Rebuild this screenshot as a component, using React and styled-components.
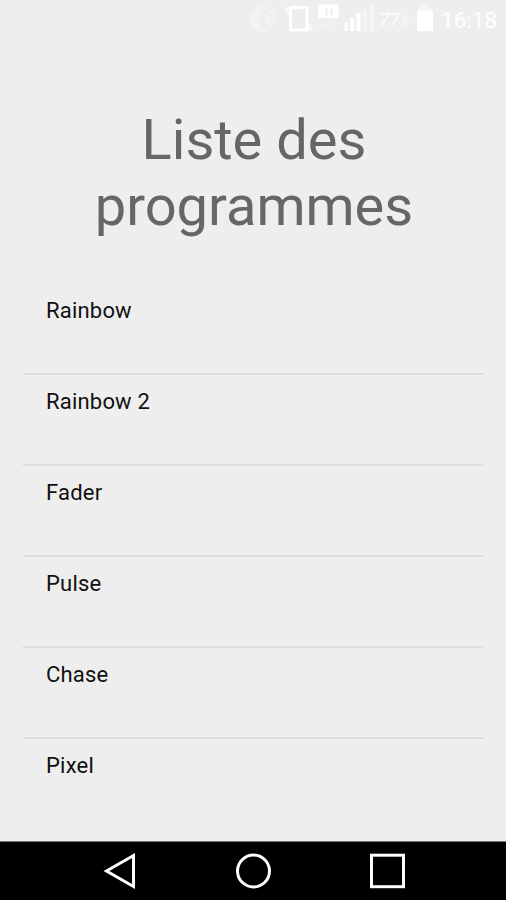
import React from "react"
import styled, { createGlobalStyle } from "styled-components"

const programs = ["Rainbow", "Rainbow 2", "Fader", "Pulse", "Chase", "Pixel"]

const App = () => (
  <Screen>
    <GlobalStyle />
    <StatusBar>
      <svg width="134" height="38" viewBox="0 0 134 38">
        {/* data saver */}
        <circle cx="18" cy="18.5" r="11" fill="none" stroke="#fff" strokeWidth="2.5" opacity="0.3" />
        <path d="M8 15l8-5v6l-3 4 4 6-4 2-6-6zM19 13l5 2 3 5-4 6-3-5z" fill="#fff" opacity="0.3" />
        {/* vibrate */}
        <rect x="45.5" y="7.5" width="16.5" height="22.5" rx="1" fill="none" stroke="#fff" strokeWidth="3" />
        <path d="M39 7h6v8h-3v-4h-3zM63 22l5 5-2 5h-3z" fill="#fff" opacity="0.6" />
        {/* network type */}
        <rect x="73" y="4.5" width="20.5" height="13.5" rx="2" fill="#fff" />
        <path d="M81.5 8v7M86.5 8v7" stroke="#eee" strokeWidth="2" />
        <path d="M83 11.5h2" stroke="#eee" opacity="0.6" />
        <path d="M78 20v7m-2-3l2 4 2-4M87 29v-8m-2 3l2-3 2 3" stroke="#fff" fill="none" opacity="0.35" />
        {/* signal */}
        <path d="M99.5 22.5h3.5V31h-3.5z" fill="#fff" opacity="0.85" />
        <path d="M105 18h4v13h-4zM111.5 13h4v18h-4z" fill="#fff" />
        <path d="M118 9h3.500v22H118zM125 4.500h4V31h-4z" fill="#fff" opacity="0.35" />
      </svg>
      <Percent>
        77<small>%</small>
      </Percent>
      <svg width="18" height="38" viewBox="0 0 18 38">
        <path d="M1 11l3-6.5h7l6 6.5z" fill="#fff" opacity="0.55" />
        <path d="M1 11h16v20H1z" fill="#fff" />
      </svg>
      <Clock>16:18</Clock>
    </StatusBar>
    <Title>
      Liste des
      <br />
      programmes
    </Title>
    <List>
      {programs.map((name) => (
        <Row key={name}>{name}</Row>
      ))}
    </List>
    <NavBar>
      <svg width="34" height="38" viewBox="0 0 34 38">
        <path d="M4.500 19L31.500 3.500v31z" />
      </svg>
      <svg width="38" height="38" viewBox="0 0 38 38">
        <circle cx="19.5" cy="19" r="16" />
      </svg>
      <svg width="38" height="38" viewBox="0 0 38 38">
        <rect x="1.5" y="3.2" width="32" height="31.5" />
      </svg>
    </NavBar>
  </Screen>
)

const GlobalStyle = createGlobalStyle`
  body {
    margin: 0;
    background: #eee;
  }
  * {
    box-sizing: border-box;
  }
`

const Screen = styled.div`
  display: flex;
  flex-direction: column;
  width: 506px;
  height: 900px;
  overflow: hidden;
  background: #eee;
  font-family: Roboto, sans-serif;
`

const StatusBar = styled.header`
  display: flex;
  flex: none;
  height: 38px;
  padding-left: 245px;
  color: #fff;
  line-height: 38px;
  svg {
    flex: none;
  }
`

const Percent = styled.span`
  width: 37px;
  flex: none;
  font-size: 19px;
  font-style: italic;
  line-height: 40px;
  opacity: 0.8;
  small {
    font-size: 14px;
  }
`

const Clock = styled.span`
  padding-left: 7px;
  font-size: 22.5px;
  line-height: 40px;
`

const Title = styled.h1`
  flex: none;
  height: 210px;
  margin: 0;
  padding: 69px 0 0 2px;
  color: #666;
  font-size: 56px;
  font-weight: 400;
  line-height: 66px;
  text-align: center;
`

const List = styled.ul`
  flex: 1;
  margin: 0;
  padding: 36px 22px 0 23px;
  list-style: none;
`

const Row = styled.li`
  height: 91px;
  padding: 13px 23px 0;
  border-bottom: 2px solid #dedede;
  color: #111;
  font-size: 22px;
  letter-spacing: 0.2px;
  line-height: 28px;
  &:last-child {
    border-bottom: 0;
  }
`

const NavBar = styled.nav`
  display: flex;
  flex: none;
  align-items: center;
  justify-content: space-between;
  height: 59px;
  padding: 0 98px 0 102px;
  border-top: 1px solid #777;
  background: #000;
  svg {
    fill: none;
    stroke: #fff;
    stroke-width: 3;
  }
`

export default App
